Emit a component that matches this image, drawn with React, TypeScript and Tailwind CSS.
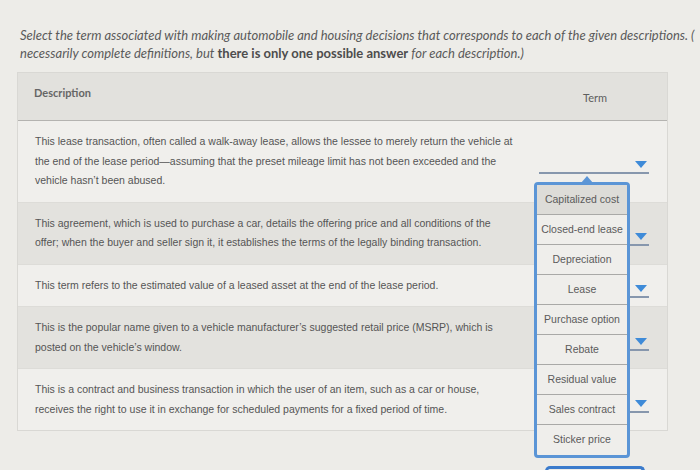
import { Fragment } from "react";

const rows = [
  {
    tone: "light",
    lines: [
      "This lease transaction, often called a walk-away lease, allows the lessee to merely return the vehicle at",
      "the end of the lease period\u2014assuming that the preset mileage limit has not been exceeded and the",
      "vehicle hasn\u2019t been abused.",
    ],
  },
  {
    tone: "dark",
    lines: [
      "This agreement, which is used to purchase a car, details the offering price and all conditions of the",
      "offer; when the buyer and seller sign it, it establishes the terms of the legally binding transaction.",
    ],
  },
  {
    tone: "light",
    lines: ["This term refers to the estimated value of a leased asset at the end of the lease period."],
  },
  {
    tone: "dark",
    lines: [
      "This is the popular name given to a vehicle manufacturer\u2019s suggested retail price (MSRP), which is",
      "posted on the vehicle\u2019s window.",
    ],
  },
  {
    tone: "light",
    lines: [
      "This is a contract and business transaction in which the user of an item, such as a car or house,",
      "receives the right to use it in exchange for scheduled payments for a fixed period of time.",
    ],
  },
];

const terms = [
  "Capitalized cost",
  "Closed-end lease",
  "Depreciation",
  "Lease",
  "Purchase option",
  "Rebate",
  "Residual value",
  "Sales contract",
  "Sticker price",
];

function Caret() {
  return (
    <svg width="12" height="7" viewBox="0 0 12 7" className="absolute right-[2px] top-[11px]">
      <path d="M0 0h12L6 7z" fill="#3f8bd8" />
    </svg>
  );
}

function TermMenu() {
  return (
    <div className="absolute left-[-5px] top-[32px] z-10 w-[96px]">
      <svg width="12" height="7" viewBox="0 0 12 7" className="absolute left-[47px] top-[-6px]">
        <path d="M0 7h12L6 0z" fill="#5b95d6" />
      </svg>
      <div className="overflow-hidden rounded-[4px] border-[3px] border-[#5b95d6] bg-[#efeeeb]">
        {terms.map((t, i) => (
          <div
            key={t}
            className={`flex h-[30px] items-center justify-center text-[10.5px] text-[#5b5b5b] ${
              i < terms.length - 1 ? "border-b border-[#a9a9a7]" : ""
            } ${i === 0 ? "bg-[#dddcd8]" : ""}`}
          >
            {t}
          </div>
        ))}
      </div>
    </div>
  );
}

export default function App() {
  return (
    <div
      className="h-[470px] w-[700px] overflow-hidden bg-[#edece8]"
      style={{ fontFamily: '"Liberation Sans", Arial, sans-serif' }}
    >
      <div
        className="pl-[20px] pt-[26px] text-[13px] leading-[18px] italic text-[#5a5a5a] whitespace-nowrap"
        style={{ fontFamily: "Lato, sans-serif" }}
      >
        <p>
          Select the term associated with making automobile and housing decisions that corresponds to each of the
          given descriptions. (
        </p>
        <p>
          necessarily complete definitions, but{" "}
          <b className="font-bold not-italic text-[#4d4d4d]">there is only one possible answer</b> for each
          description.)
        </p>
      </div>

      <div className="ml-[17px] mt-[10px] w-[651px] border border-[#d9d8d4]">
        <div className="flex h-[48px] border-b border-[#b4b3b0] bg-[#e2e1dd]" style={{ fontFamily: "Lato, sans-serif" }}>
          <div className="flex-1 pl-[16px] pt-[12px] text-[11px] font-bold text-[#666]">Description</div>
          <div className="flex w-[148px] items-center justify-center pl-[4px] pt-[4px] text-[11px] text-[#5e5e5e]">Term</div>
        </div>

        {rows.map((row, idx) => (
          <div
            key={idx}
            className={`flex border-b border-[#dddcd8] last:border-b-0 ${
              row.tone === "light" ? "bg-[#f0efec]" : "bg-[#e3e2de]"
            }`}
          >
            <div className="flex-1 py-[11px] pl-[17px] text-[10.5px] leading-[19.5px] text-[#555] whitespace-nowrap">
              {row.lines.map((l, i) => (
                <Fragment key={i}>
                  <span className="block">{l}</span>
                </Fragment>
              ))}
            </div>
            <div className="flex w-[148px] items-center pl-[20px] pr-[18px] pt-[2px]">
              <div className="relative h-[24px] w-full border-b-2 border-[#8797ad]">
                <Caret />
                {idx === 0 ? <TermMenu /> : null}
              </div>
            </div>
          </div>
        ))}
      </div>

      <div className="ml-[545px] mt-[35px] h-[20px] w-[100px] rounded-t-[5px] border-[3px] border-b-0 border-[#3c7ccc]" />
    </div>
  );
}
